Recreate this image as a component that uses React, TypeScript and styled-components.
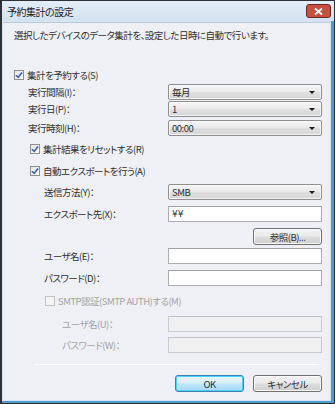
import React from "react";
import styled, { createGlobalStyle } from "styled-components";

const Global = createGlobalStyle`
  html, body { margin: 0; padding: 0; background: #ffffff; }
  body {
    font-family: "Noto Sans CJK JP", "Noto Sans", sans-serif;
    font-size: 9.5px;
    letter-spacing: -0.5px;
    color: #2e2e2e;
    font-feature-settings: "palt";
  }
  * { box-sizing: border-box; }
`;

const Frame = styled.div`
  width: 335px;
  height: 404px;
  display: flex;
  flex-direction: column;
  background: #d8e5f2;
  border: 1px solid #2e3238;
  border-left-width: 2px;
  box-shadow: inset -3px -2px 0 #4f9bd0;
`;

const TitleBar = styled.div`
  height: 20px;
  display: flex;
  align-items: center;
  justify-content: space-between;
  padding: 0 3px 0 5px;
  background: linear-gradient(to bottom, #e3edf7 0%, #d4e2f0 100%);
`;

const Title = styled.span`
  font-size: 10px;
  color: #1b1b1b;
`;

const CloseButton = styled.div`
  flex: 0 0 25px;
  width: 25px;
  height: 14px;
  border: 1px solid #6e2a22;
  border-radius: 3px;
  background: #c4503f;
  display: flex;
  align-items: center;
  justify-content: center;
`;

const Client = styled.div`
  flex: 1;
  margin: 1px 4px 3px 1px;
  background: #eef0f5;
  border-top: 1px solid #b9c9da;
  display: flex;
  flex-direction: column;
`;

const Desc = styled.div`
  margin: 4px 0 0 11px;
  height: 16px;
  line-height: 16px;
`;

const Row = styled.div<{ $mt: number; $h?: number; $indent: number }>`
  display: flex;
  align-items: center;
  margin-top: ${(p) => p.$mt}px;
  height: ${(p) => p.$h ?? 16}px;
  padding-left: ${(p) => p.$indent}px;
  padding-right: 8px;
`;

const Label = styled.span<{ $disabled?: boolean }>`
  flex: 1;
  color: ${(p) => (p.$disabled ? "#a3a3a3" : "#2e2e2e")};
  white-space: nowrap;
`;

const Field = styled.div`
  width: 154px;
  height: 100%;
  display: flex;
  justify-content: flex-end;
`;

const Combo = styled.div`
  width: 100%;
  height: 100%;
  border: 1px solid #8e8f8f;
  border-radius: 2px;
  background: linear-gradient(to bottom, #f4f4f4 0%, #ececec 45%, #dedede 55%, #d6d6d6 100%);
  box-shadow: inset 0 0 0 1px rgba(255, 255, 255, 0.7);
  display: flex;
  align-items: center;
  justify-content: space-between;
  padding: 0 6px 0 3px;
`;

const Arrow = styled.span`
  width: 0;
  height: 0;
  border-left: 3px solid transparent;
  border-right: 3px solid transparent;
  border-top: 3px solid #1a1a1a;
`;

const TextBox = styled.div<{ $disabled?: boolean }>`
  width: 100%;
  height: 100%;
  border: 1px solid ${(p) => (p.$disabled ? "#c9cbcf" : "#abadb3")};
  border-top-color: ${(p) => (p.$disabled ? "#c0c2c6" : "#9ea1a8")};
  background: ${(p) => (p.$disabled ? "#f0f0f0" : "#ffffff")};
  display: flex;
  align-items: center;
  padding: 0 3px;
  font-family: "DejaVu Sans", "Noto Sans CJK JP", sans-serif;
  font-size: 9px;
  letter-spacing: 0;
`;

const CheckRow = styled.label<{ $mt: number; $indent: number; $disabled?: boolean }>`
  display: flex;
  align-items: center;
  gap: 3px;
  height: 14px;
  margin-top: ${(p) => p.$mt}px;
  padding-left: ${(p) => p.$indent}px;
  color: ${(p) => (p.$disabled ? "#a3a3a3" : "#2e2e2e")};
  white-space: nowrap;
`;

const Box = styled.span<{ $disabled?: boolean }>`
  width: 10px;
  height: 10px;
  border: 1px solid ${(p) => (p.$disabled ? "#c2c2c2" : "#8e8f8f")};
  background: ${(p) =>
    p.$disabled ? "#f4f4f4" : "linear-gradient(135deg, #e4e4e4 0%, #f8f8f8 100%)"};
  display: flex;
  align-items: center;
  justify-content: center;
`;

const Button = styled.div<{ $focused?: boolean }>`
  width: 69px;
  height: 17px;
  border: 1px solid ${(p) => (p.$focused ? "#3c7fb1" : "#707070")};
  border-radius: 3px;
  background: ${(p) =>
    p.$focused
      ? "linear-gradient(to bottom, #eaf6fd 0%, #d9f0fc 45%, #bee6fd 55%, #a7d9f5 100%)"
      : "linear-gradient(to bottom, #f2f2f2 0%, #ebebeb 45%, #dddddd 55%, #cfcfcf 100%)"};
  box-shadow: inset 0 0 0 1px ${(p) => (p.$focused ? "#48d5fa" : "rgba(255,255,255,0.8)")};
  display: flex;
  align-items: center;
  justify-content: center;
  color: #2e2e2e;
`;

const ButtonRow = styled.div<{ $mt: number }>`
  display: flex;
  justify-content: flex-end;
  gap: 9px;
  margin-top: ${(p) => p.$mt}px;
  padding-right: 8px;
`;

const Separator = styled.div<{ $mt: number }>`
  margin: ${(p) => p.$mt}px 11px 0 31px;
  height: 1px;
  background: #a0a0a0;
  border-bottom: 1px solid #ffffff;
`;

const Check = ({ disabled }: { disabled?: boolean }) => (
  <Box $disabled={disabled}>
    {!disabled && (
      <svg width="8" height="8" viewBox="0 0 8 8">
        <path d="M1 4.2 L3.2 6.4 L7 1.4" fill="none" stroke="#3c5fa8" strokeWidth="1.6" />
      </svg>
    )}
  </Box>
);

export default function App() {
  return (
    <>
      <Global />
      <Frame>
        <TitleBar>
          <Title>予約集計の設定</Title>
          <CloseButton>
            <svg width="9" height="7" viewBox="0 0 9 7">
              <path d="M1 0.5 L8 6.5 M8 0.5 L1 6.5" stroke="#ffffff" strokeWidth="1.8" />
            </svg>
          </CloseButton>
        </TitleBar>
        <Client>
          <Desc>選択したデバイスのデータ集計を、設定した日時に自動で行います。</Desc>

          <CheckRow $mt={25} $indent={11}>
            <Check />
            集計を予約する(S)
          </CheckRow>

          <Row $mt={2} $indent={25}>
            <Label>実行間隔(I)：</Label>
            <Field>
              <Combo>
                毎月
                <Arrow />
              </Combo>
            </Field>
          </Row>
          <Row $mt={1} $indent={25}>
            <Label>実行日(P)：</Label>
            <Field>
              <Combo>
                1
                <Arrow />
              </Combo>
            </Field>
          </Row>
          <Row $mt={3} $indent={25}>
            <Label>実行時刻(H)：</Label>
            <Field>
              <Combo>
                00:00
                <Arrow />
              </Combo>
            </Field>
          </Row>

          <CheckRow $mt={6} $indent={27}>
            <Check />
            集計結果をリセットする(R)
          </CheckRow>
          <CheckRow $mt={8} $indent={27}>
            <Check />
            自動エクスポートを行う(A)
          </CheckRow>

          <Row $mt={6} $indent={41}>
            <Label>送信方法(Y)：</Label>
            <Field>
              <Combo>
                SMB
                <Arrow />
              </Combo>
            </Field>
          </Row>
          <Row $mt={6} $indent={41}>
            <Label>エクスポート先(X)：</Label>
            <Field>
              <TextBox>¥¥</TextBox>
            </Field>
          </Row>
          <Row $mt={6} $h={15} $indent={41}>
            <Label />
            <Field>
              <Button>参照(B)...</Button>
            </Field>
          </Row>
          <Row $mt={5} $indent={41}>
            <Label>ユーザ名(E)：</Label>
            <Field>
              <TextBox />
            </Field>
          </Row>
          <Row $mt={6} $indent={41}>
            <Label>パスワード(D)：</Label>
            <Field>
              <TextBox />
            </Field>
          </Row>

          <CheckRow $mt={8} $indent={42} $disabled>
            <Check disabled />
            SMTP認証(SMTP AUTH)する(M)
          </CheckRow>

          <Row $mt={8} $indent={59}>
            <Label $disabled>ユーザ名(U)：</Label>
            <Field>
              <TextBox $disabled />
            </Field>
          </Row>
          <Row $mt={5} $indent={59}>
            <Label $disabled>パスワード(W)：</Label>
            <Field>
              <TextBox $disabled />
            </Field>
          </Row>

          <Separator $mt={11} />

          <ButtonRow $mt={10}>
            <Button $focused>OK</Button>
            <Button>キャンセル</Button>
          </ButtonRow>
        </Client>
      </Frame>
    </>
  );
}
